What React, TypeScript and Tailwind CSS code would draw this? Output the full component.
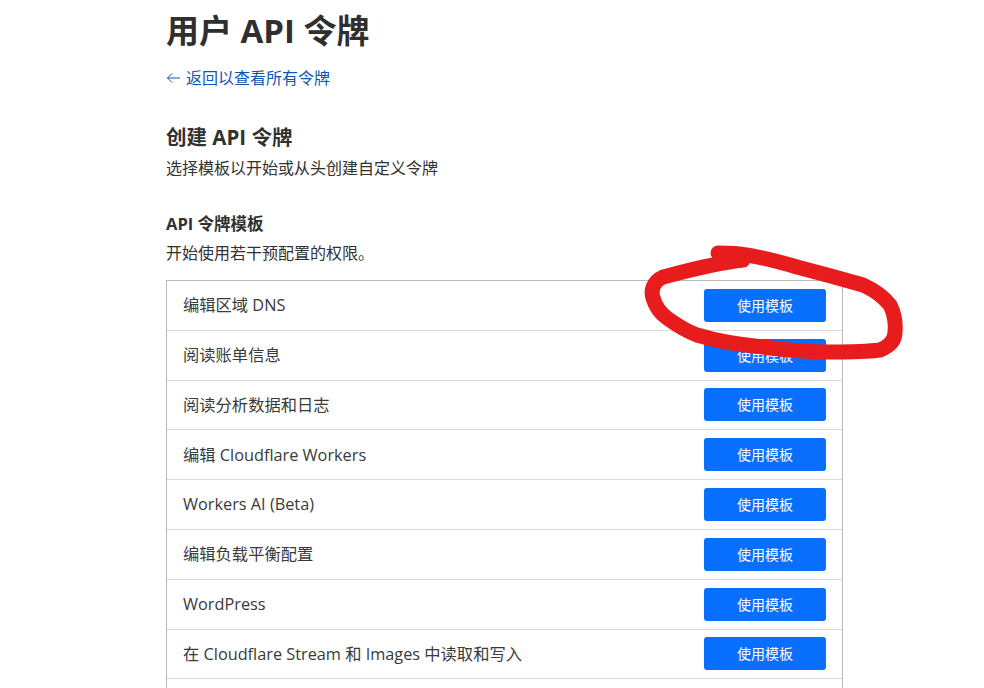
const templates = [
  '编辑区域 DNS',
  '阅读账单信息',
  '阅读分析数据和日志',
  '编辑 Cloudflare Workers',
  'Workers AI (Beta)',
  '编辑负载平衡配置',
  'WordPress',
  '在 Cloudflare Stream 和 Images 中读取和写入',
]

export default function App() {
  return (
    <div className="relative h-[688px] overflow-hidden bg-white text-[#313131] font-['Open_Sans','Noto_Sans_CJK_SC',sans-serif]">
      <div className="w-[677px] ml-[166px]">
        <h1 className="pt-[9px] text-[33px] leading-[44px] font-bold text-[#2f2f2f]">用户 API 令牌</h1>
        <a className="mt-[14px] flex items-center gap-[6px] text-[16px] leading-[22px] text-[#0f56b3]" href="#">
          <svg width="14" height="14" viewBox="0 0 14 14" fill="none" stroke="currentColor" strokeWidth="1">
            <path d="M14 7H1.5M6 2.5L1.5 7 6 11.5" />
          </svg>
          返回以查看所有令牌
        </a>
        <h2 className="mt-[34px] text-[20.5px] leading-[28px] font-bold">创建 API 令牌</h2>
        <p className="mt-[5px] text-[16px] leading-[24px]">选择模板以开始或从头创建自定义令牌</p>
        <h3 className="mt-[32px] text-[16.5px] leading-[24px] font-bold">API 令牌模板</h3>
        <p className="mt-[6px] text-[16px] leading-[22px]">开始使用若干预配置的权限。</p>
        <div className="mt-[16px] border border-[#b9b9b9] border-b-0">
          {templates.map((name) => (
            <div key={name} className="h-[49.8px] flex items-center justify-between px-[16px] border-b border-[#d9d9d9]">
              <span className="text-[16.3px] text-[#3a3a3a]">{name}</span>
              <button className="w-[122px] h-[33px] rounded-[3px] bg-[#086fff] text-white text-[14px]">使用模板</button>
            </div>
          ))}
          <div className="h-[49.8px] flex items-center justify-end px-[16px]">
            <div className="w-[122px] h-[33px] rounded-[3px] bg-[#1a6fc4]" />
          </div>
        </div>
      </div>
      <svg className="absolute left-0 top-0 pointer-events-none" width="984" height="688" fill="none">
        <path
          d="M743 260C715 263 690 270 663 277C652 282 651 292 653 298C656 308 660 313 667 318C678 326 686 331 697 335C720 342 742 345 763 347C785 350 808 352 830 352C848 352 865 352 880 350C890 346 895 340 895 332C896 322 894 313 890 305C883 296 874 290 863 285C842 279 820 273 797 267C780 262 765 258 747 255C737 253 727 253 718 253"
          stroke="#e81c1c"
          strokeWidth="15"
          strokeLinecap="round"
          strokeLinejoin="round"
        />
      </svg>
    </div>
  )
}
